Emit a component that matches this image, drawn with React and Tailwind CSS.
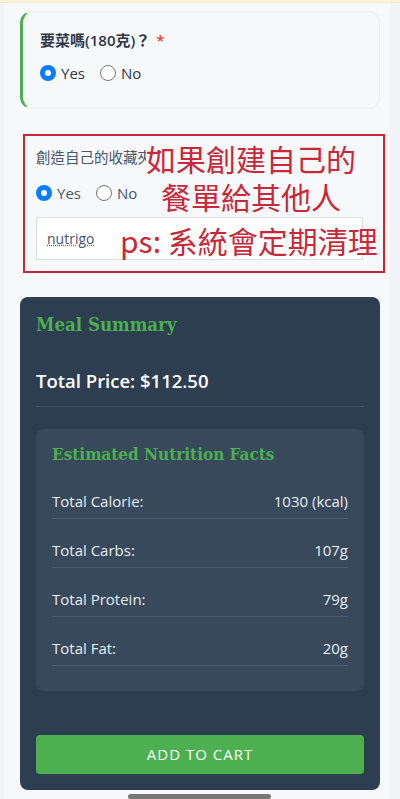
import React from "react";

const sans = { fontFamily: '"Open Sans", "Noto Sans CJK TC", sans-serif' };
const serif = { fontFamily: '"DejaVu Serif Condensed", "DejaVu Serif", serif' };
const cjk = { fontFamily: '"Noto Sans CJK TC", sans-serif' };

function Radio({ checked, label, color = "text-[#2d3748]" }) {
  return (
    <div className="flex items-center gap-[5px]">
      {checked ? (
        <span className="w-[16px] h-[16px] rounded-full bg-[#0a7cff] flex items-center justify-center">
          <span className="w-[6px] h-[6px] rounded-full bg-white" />
        </span>
      ) : (
        <span className="w-[16px] h-[16px] rounded-full border-[1.5px] border-[#777] bg-white" />
      )}
      <span className={`text-[15px] ${color}`}>{label}</span>
    </div>
  );
}

function Row({ label, value }) {
  return (
    <div className="flex justify-between items-center border-b border-[#4a5b6d] text-[15px] text-[#e8edf2] leading-[20px] pt-[21px] pb-[7px]">
      <span>{label}</span>
      <span>{value}</span>
    </div>
  );
}

export default function App() {
  return (
    <div className="min-h-[799px] bg-[#f2f3f5] flex flex-col relative" style={sans}>
      <div className="h-[3px] bg-[#fdf3d6] border-b border-[#f3ead0]" />
      <div className="ml-[4px] mr-[10px] bg-[#f7f8fa] flex-1 pl-[16px] pr-[6px] pt-[8px] pb-[9px] flex flex-col">
        <div className="rounded-xl border border-[#eceef1] border-l-[3px] border-l-[#4caf50] bg-[#f7f8fa] pl-[17px] pt-[18px] pb-[23px] w-[360px]">
          <div className="text-[15px] font-semibold text-[#2d3748] leading-[20px]">
            要菜嗎(180克)？ <span className="text-[#e53e3e] ml-[2px]">*</span>
          </div>
          <div className="flex gap-[15px] mt-[12px]">
            <Radio checked label="Yes" />
            <Radio label="No" />
          </div>
        </div>

        <div className="relative w-[360px] mt-[39px] pl-[16px] pr-[17px]">
          <div className="text-[14.5px] text-[#4a5568] leading-[20px]">創造自己的收藏夾？</div>
          <div className="flex gap-[15px] mt-[14px]">
            <Radio checked label="Yes" color="text-[#4a5568]" />
            <Radio label="No" color="text-[#4a5568]" />
          </div>
          <div className="mt-[13px] h-[43px] bg-white border border-[#dcdde0] flex items-center pl-[10px]">
            <span className="text-[14px] text-[#4a5568] underline decoration-dotted decoration-[#e53e3e]">nutrigo</span>
          </div>
          <div className="absolute left-[3px] top-[-14px] w-[362px] h-[139px] border-2 border-[#c8283a] pointer-events-none" />
          <div
            className="absolute left-[106px] top-[-9px] w-[250px] text-[30px] leading-[38px] text-[#c8283a] text-center"
            style={cjk}
          >
            <div className="bg-[#f7f8fa] w-fit mx-auto h-[38px]">如果創建自己的</div>
            <div>餐單給其他人</div>
          </div>
          <div
            className="absolute left-[100px] top-[73px] text-[30px] leading-[38px] text-[#c8283a] whitespace-nowrap"
            style={cjk}
          >
            ps: 系統會定期清理
          </div>
        </div>

        <div className="mt-[37px] w-[360px] bg-[#2d3e50] rounded-lg px-[16px] pt-[14px] pb-[16px]">
          <div className="text-[18.5px] font-bold text-[#4caf50] leading-[28px]" style={serif}>
            Meal Summary
          </div>
          <div className="mt-[29px] text-[18.5px] font-semibold text-white leading-[26px]">
            Total Price: $112.50
          </div>
          <div className="mt-[12px] border-b border-[#3f5163]" />
          <div className="mt-[22px] bg-[#37495b] rounded-lg px-[16px] pt-[13px] pb-[25px]">
            <div className="text-[17px] font-bold text-[#4caf50] leading-[24px]" style={serif}>
              Estimated Nutrition Facts
            </div>
            <div className="mt-[4px]">
              <Row label="Total Calorie:" value="1030 (kcal)" />
              <Row label="Total Carbs:" value="107g" />
              <Row label="Total Protein:" value="79g" />
              <Row label="Total Fat:" value="20g" />
            </div>
          </div>
          <button className="mt-[44px] w-full h-[39px] bg-[#4caf50] rounded-[4px] text-white text-[15px] font-medium tracking-[1px]">
            ADD TO CART
          </button>
        </div>
      </div>
      <div className="absolute left-[128px] bottom-0 w-[143px] h-[5px] rounded-full bg-[#777]" />
    </div>
  );
}
